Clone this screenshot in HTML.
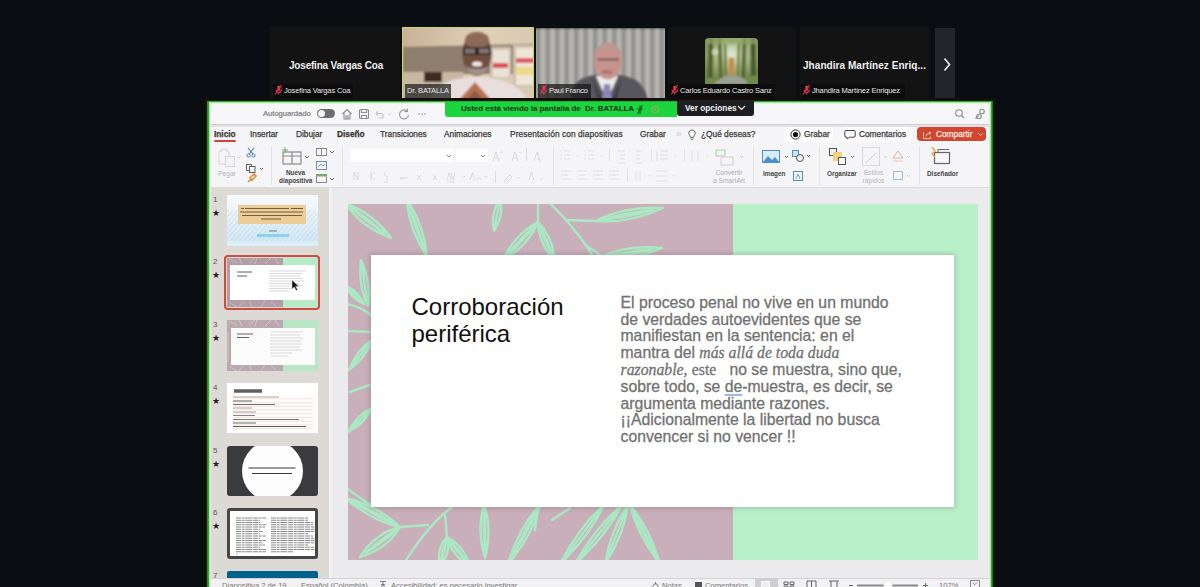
<!DOCTYPE html>
<html><head><meta charset="utf-8">
<style>
*{margin:0;padding:0;box-sizing:border-box}
html,body{width:1200px;height:587px;overflow:hidden;background:#0a0e13;font-family:"Liberation Sans",sans-serif}
.a{position:absolute}
.tile{position:absolute;top:27px;height:74px;background:#131313;overflow:hidden}
.tn{position:absolute;top:59px;color:#f0f0f0;font-weight:bold;font-size:10px;line-height:14px;letter-spacing:-0.2px;white-space:nowrap}
.lbl{position:absolute;top:84px;height:14px;background:#0c0c0c;color:#e8e8e8;font-size:7.5px;line-height:14px;padding-left:1px;white-space:nowrap;letter-spacing:-0.15px}
.mic{display:inline-block;width:9px;height:11px;vertical-align:-2px;margin-right:1px}
.tab{position:absolute;top:25px;font-size:8.3px;line-height:10px;color:#3a3a3a;white-space:nowrap;-webkit-text-stroke:0.25px currentColor}
.rl{position:absolute;font-size:7px;color:#333;text-align:center;line-height:8px;white-space:nowrap}
.gi{color:#bbb}
.thumb{position:absolute;left:227px;width:91px;height:51px;overflow:hidden}
.tnum{position:absolute;left:213px;font-size:8px;color:#555}
.star{position:absolute;left:212px;font-size:9px;color:#222}
.st{position:absolute;top:581px;font-size:7.6px;line-height:9px;color:#777;white-space:nowrap}
</style></head><body>

<!-- video strip -->
<div class="tile" style="left:270px;width:130px"></div>
<div class="tn" style="left:289px">Josefina Vargas Coa</div>
<div class="lbl" style="left:273px;width:80px"><svg class="mic" viewBox="0 0 10 12"><rect x="3.6" y="1.5" width="3.4" height="6" rx="1.7" fill="#d23a48"/><path d="M2.2 6c0 2.2 1.3 3.2 3.1 3.2s3.1-1 3.1-3.2 M5.3 9.2v2.3 M1.5 11.3L8.6 1" stroke="#d23a48" stroke-width="1.3" fill="none"/></svg><span>Josefina Vargas Coa</span></div>

<div class="tile" style="left:402px;width:132px;border:1px solid #c9d65c;padding:0">
<svg width="130" height="72" viewBox="403 28 130 72" style="display:block">
 <defs><filter id="b1"><feGaussianBlur stdDeviation="1.3"/></filter>
 <linearGradient id="g1" x1="0" y1="0" x2="1" y2="0"><stop offset="0" stop-color="#c8b197"/><stop offset=".6" stop-color="#e2d0b8"/><stop offset="1" stop-color="#d9c8b2"/></linearGradient></defs>
 <rect x="403" y="28" width="130" height="72" fill="url(#g1)"/>
 <g filter="url(#b1)">
 <path d="M403 47 L533 44 L533 74 L403 74Z" fill="#8e7e6e"/>
 <rect x="403" y="72" width="60" height="28" fill="#c9b8a4"/>
 <rect x="490" y="47" width="21" height="32" fill="#cfc2b2"/>
 <rect x="493" y="50" width="16" height="27" fill="#ebe2d6"/>
 <rect x="493" y="63" width="15" height="5" fill="#d94c55"/>
 <rect x="513" y="45" width="21" height="42" fill="#cdbfae"/>
 <rect x="516" y="48" width="18" height="37" fill="#efe6d8"/>
 <rect x="516" y="58" width="18" height="5" fill="#dc5a62"/>
 <rect x="516" y="67" width="18" height="8" fill="#ecd98a"/>
 <rect x="424" y="72" width="18" height="10" fill="#3c2a22"/>
 <path d="M430 101 C434 84 450 78 476 77 C502 78 520 84 528 101Z" fill="#e9dede"/>
 <ellipse cx="477" cy="54" rx="14.5" ry="22" fill="#6f4d3e"/>
 <ellipse cx="477" cy="40" rx="12" ry="8" fill="#8d6a58"/>
 <path d="M463 47h28v8h-28z" fill="#2c2320"/>
 <rect x="465" y="48.5" width="10" height="5" fill="#857372"/>
 <rect x="479" y="48.5" width="10" height="5" fill="#857372"/>
 <path d="M466 66 C468 78 486 78 488 66 C484 70 470 70 466 66Z" fill="#9f938c"/>
 <ellipse cx="477" cy="64" rx="5" ry="2.5" fill="#f0e8e6"/>
 <path d="M458 101 L475 82 L492 101Z" fill="#b8704c"/>
 <path d="M466 101 L475 90 L484 101Z" fill="#8a5a44"/>
 </g>
</svg>
</div>
<div class="lbl" style="left:405px;width:46px;background:rgba(40,40,40,.78)"><span style="margin-left:1px">Dr. BATALLA</span></div>

<div class="tile" style="left:536px;width:129px;top:28px;height:73px">
<svg width="129" height="73" viewBox="536 28 129 73" style="display:block">
 <defs><filter id="b2"><feGaussianBlur stdDeviation="1.2"/></filter><filter id="b2s"><feGaussianBlur stdDeviation="1.4"/></filter>
 <pattern id="cur" x="536" width="9.5" height="73" patternUnits="userSpaceOnUse"><rect width="9.5" height="73" fill="#bab9b6"/><rect x="0" width="4.5" height="73" fill="#8e8d8a"/></pattern></defs>
 <rect x="530" y="28" width="140" height="73" fill="url(#cur)" filter="url(#b2s)"/>
 <g filter="url(#b2)">
 <path d="M570 101 C572 80 582 75 607 74 C632 75 644 80 648 101Z" fill="#56575c"/>
 <path d="M596 76 L607 101 L618 76Z" fill="#ecebea"/>
 <path d="M604 84 L610 84 L612 101 L602 101Z" fill="#8d86b8"/>
 <path d="M592 78 L603 101 L598 101Z M622 78 L611 101 L616 101Z" fill="#3d3e42"/>
 <ellipse cx="608" cy="61" rx="14" ry="18.5" fill="#c7948d"/>
 <path d="M594 55 C595 40 621 40 622 55 C618 46 598 46 594 55Z" fill="#b89a92"/>
 <rect x="597" y="58" width="22" height="3" fill="#8e6a66"/>
 <ellipse cx="607" cy="72" rx="6" ry="2" fill="#b0706a"/>
 </g>
</svg>
</div>
<div class="lbl" style="left:538px;width:53px;background:rgba(25,25,25,.75)"><svg class="mic" viewBox="0 0 10 12"><rect x="3.6" y="1.5" width="3.4" height="6" rx="1.7" fill="#d23a48"/><path d="M2.2 6c0 2.2 1.3 3.2 3.1 3.2s3.1-1 3.1-3.2 M5.3 9.2v2.3 M1.5 11.3L8.6 1" stroke="#d23a48" stroke-width="1.3" fill="none"/></svg><span>Paul Franco</span></div>

<div class="tile" style="left:668px;width:128px"></div>
<svg class="a" style="left:705px;top:38px" width="53" height="46" viewBox="0 0 53 46">
 <defs><filter id="b3"><feGaussianBlur stdDeviation="0.8"/></filter><clipPath id="rc"><rect width="53" height="50" rx="4"/></clipPath>
 <radialGradient id="fg" cx=".5" cy=".35" r=".6"><stop offset="0" stop-color="#dfe9d8"/><stop offset=".5" stop-color="#a7b982"/><stop offset="1" stop-color="#6f8248"/></radialGradient></defs>
 <g clip-path="url(#rc)">
 <rect width="53" height="46" fill="url(#fg)"/>
 <g filter="url(#b3)">
 <path d="M4 0h4l-1 46h-4z" fill="#4d5a2c"/>
 <path d="M13 0h3l2 46h-4z" fill="#5b6a34"/>
 <path d="M19 6h2l1 34h-3z" fill="#6d7a44"/>
 <path d="M33 4h2l-1 36h-2z" fill="#6a7840"/>
 <path d="M38 0h3l-1 46h-4z" fill="#55653a"/>
 <path d="M46 0h4l1 46h-5z" fill="#4a5830"/>
 <rect x="0" y="0" width="53" height="6" fill="#90a468" opacity=".7"/>
 <rect x="24" y="20" width="5" height="17" fill="#c98a4e"/>
 <path d="M6 46 L20 38 L34 38 L48 46Z" fill="#9aa394"/>
 <rect x="0" y="40" width="10" height="6" fill="#6f8a4a"/><rect x="42" y="38" width="11" height="8" fill="#6f8a4a"/>
 <circle cx="10" cy="14" r="3" fill="#d8e2c0" opacity=".8"/>
 </g></g>
</svg>
<div class="lbl" style="left:669px;width:106px;background:rgba(12,12,12,.85)"><svg class="mic" viewBox="0 0 10 12"><rect x="3.6" y="1.5" width="3.4" height="6" rx="1.7" fill="#d23a48"/><path d="M2.2 6c0 2.2 1.3 3.2 3.1 3.2s3.1-1 3.1-3.2 M5.3 9.2v2.3 M1.5 11.3L8.6 1" stroke="#d23a48" stroke-width="1.3" fill="none"/></svg><span>Carlos Eduardo Castro Sanz</span></div>

<div class="tile" style="left:800px;width:129px"></div>
<div class="tn" style="left:803px;letter-spacing:0.05px">Jhandira Martínez Enriq...</div>
<div class="lbl" style="left:801px;width:104px"><svg class="mic" viewBox="0 0 10 12"><rect x="3.6" y="1.5" width="3.4" height="6" rx="1.7" fill="#d23a48"/><path d="M2.2 6c0 2.2 1.3 3.2 3.1 3.2s3.1-1 3.1-3.2 M5.3 9.2v2.3 M1.5 11.3L8.6 1" stroke="#d23a48" stroke-width="1.3" fill="none"/></svg><span>Jhandira Martínez Enriquez</span></div>

<div class="a" style="left:935px;top:28px;width:20px;height:71px;background:#22262a"></div>
<svg class="a" style="left:942px;top:57px" width="10" height="15" viewBox="0 0 10 15"><path d="M2.5 1.5l5 6-5 6" stroke="#e8e8e8" stroke-width="1.7" fill="none"/></svg>

<!-- share window -->
<div class="a" style="left:204px;top:98px;width:792px;height:495px;background:#170c0b"></div><div class="a" style="left:206px;top:100px;width:788px;height:495px;background:#032e05"></div><div class="a" style="left:207px;top:101px;width:786px;height:495px;background:#2f8a30"></div><div class="a" style="left:208px;top:101px;width:784px;height:495px;background:#3c9e3a"></div><div class="a" style="left:209px;top:102px;width:782px;height:495px;background:#a6e99c"></div><div class="a" style="left:210px;top:103px;width:780px;height:495px;background:#e6f2e4"></div>
<div class="a" style="left:210px;top:104px;width:780px;height:490px;background:#f4f3f5;overflow:hidden" id="win">
 <!-- title bar -->
 <div class="a" style="left:0;top:0;width:780px;height:20px;background:#f6f5f7"></div>
 <div class="a" style="left:53px;top:5px;font-size:7.6px;color:#7c7c7c;white-space:nowrap;-webkit-text-stroke:0.2px #7c7c7c">Autoguardado</div>
 <div class="a" style="left:107px;top:5px;width:18px;height:9px;border-radius:5px;background:#6e6e70"></div>
 <div class="a" style="left:108px;top:6px;width:7px;height:7px;border-radius:4px;background:#f4f4f4"></div>
 <svg class="a" style="left:131px;top:3px" width="100" height="14" viewBox="0 0 100 14" fill="none" stroke="#8e8e90" stroke-width="1.1">
  <path d="M1.5 7 L6 2.5 L10.5 7 M3 6v6h6V6 M5 12v-3h2v3"/>
  <rect x="18.5" y="2.5" width="9" height="9" rx="1"/><path d="M20.5 2.5v3h5v-3 M20.5 11.5v-3h5v3"/>
  <path d="M37 4.5 L35 6.5 L37 8.5 M35.2 6.5 H40 C43 6.5 43 11 40 11 H38" stroke="#c4c4c6"/>
  <path d="M47 6.5l1.5 1.5 1.5-1.5" stroke="#c4c4c6" stroke-width="0.8"/>
  <path d="M66 4 A4.5 4.5 0 1 0 67.5 8 M66.5 1.5 V4.5 H63.5" stroke="#9a9a9c"/>
  <circle cx="78" cy="7" r="0.8" fill="#8e8e90" stroke="none"/><circle cx="81" cy="7" r="0.8" fill="#8e8e90" stroke="none"/><circle cx="84" cy="7" r="0.8" fill="#8e8e90" stroke="none"/>
 </svg>
 <svg class="a" style="left:744px;top:3px" width="34" height="14" viewBox="0 0 34 14" fill="none" stroke="#8a8a8c" stroke-width="1.1">
  <circle cx="5" cy="6" r="3.3"/><path d="M7.5 8.5l2.5 2.5"/>
  <circle cx="28" cy="4.5" r="2.2"/><circle cx="25" cy="9.5" r="2.2"/><path d="M22 12c0-2 1-3 3-3"/>
 </svg>
 <div class="a" style="left:0;top:20px;width:780px;height:1px;background:#cfcdcf"></div>
 <div class="a" style="left:0;top:21px;width:780px;height:2px;background:#e3e1e3"></div>

 <!-- tabs -->
 <div class="a" style="left:0;top:23px;width:780px;height:61px;background:#f5f4f6"></div>
 <div class="tab" style="left:4px;font-weight:bold;color:#3a3a3a">Inicio</div>
 <div class="a" style="left:4px;top:36px;width:22px;height:2px;border-radius:1px;background:#c9453f"></div>
 <div class="tab" style="left:40px">Insertar</div>
 <div class="tab" style="left:86px">Dibujar</div>
 <div class="tab" style="left:127px;font-weight:bold;color:#333">Diseño</div>
 <div class="tab" style="left:170px">Transiciones</div>
 <div class="tab" style="left:234px">Animaciones</div>
 <div class="tab" style="left:300px;letter-spacing:0.1px">Presentación con diapositivas</div>
 <div class="tab" style="left:430px">Grabar</div>
 <div class="tab" style="left:466px;color:#cfcfcf;font-size:10px;-webkit-text-stroke:0">»</div>
 <svg class="a" style="left:478px;top:25px" width="8" height="12" viewBox="0 0 8 12" fill="none" stroke="#555" stroke-width="0.9"><path d="M4 1C1.8 1 0.8 2.6 0.8 4.2c0 1.6 1.4 2.6 1.6 4.2h3.2c0.2-1.6 1.6-2.6 1.6-4.2C7.2 2.6 6.2 1 4 1z M2.6 10.3h2.8"/></svg>
 <div class="tab" style="left:491px">¿Qué deseas?</div>
 <div class="a" style="left:575px;top:23px;width:48px;height:15px;border-radius:4px;background:#fbfafc"></div>
 <svg class="a" style="left:580px;top:25px" width="11" height="11" viewBox="0 0 11 11"><circle cx="5.5" cy="5.5" r="4.6" fill="none" stroke="#333" stroke-width="1"/><circle cx="5.5" cy="5.5" r="2.6" fill="#111"/></svg>
 <div class="tab" style="left:594px">Grabar</div>
 <div class="a" style="left:630px;top:23px;width:72px;height:15px;border-radius:4px;background:#fbfafc"></div>
 <svg class="a" style="left:634px;top:25px" width="12" height="11" viewBox="0 0 12 11" fill="none" stroke="#444" stroke-width="1"><path d="M2 1.5h8a1.2 1.2 0 0 1 1.2 1.2v4.3a1.2 1.2 0 0 1-1.2 1.2H5.5L3 10V8.2H2A1.2 1.2 0 0 1 0.8 7V2.7A1.2 1.2 0 0 1 2 1.5z"/></svg>
 <div class="tab" style="left:649px">Comentarios</div>
 <div class="a" style="left:707px;top:23px;width:69px;height:14px;border-radius:4px;background:#d2462f"></div>
 <svg class="a" style="left:712px;top:25px" width="11" height="11" viewBox="0 0 11 11" fill="none" stroke="#f7d9d2" stroke-width="0.9"><path d="M1.5 3.5v6h7v-2 M4 7.5c0.5-2.5 2-3.5 4-3.5 M7 2.3L9 4 7 5.8"/></svg>
 <div class="tab" style="left:726px;color:#fbe8e3">Compartir</div>
 <svg class="a" style="left:767px;top:28px" width="7" height="5" viewBox="0 0 7 5"><path d="M1 1l2.5 2.5L6 1" stroke="#f4cfc6" stroke-width="0.9" fill="none"/></svg>
 <!-- ribbon -->
 <div class="a" style="left:0;top:83px;width:780px;height:1px;background:#dddcde"></div>
 <svg class="a" style="left:0;top:39px" width="780" height="45" viewBox="210 143 780 45" fill="none" stroke-width="1">
  <!-- separators -->
  <g stroke="#e3e3e3"><path d="M271.5 147v38 M342.5 147v38 M553.5 147v38 M753.5 147v38 M819.5 147v38 M919.5 147v38"/></g>
  <!-- Pegar -->
  <g stroke="#d6d6d6"><path d="M219 151h3v-2h4v2h3v13h-10z"/><rect x="225.5" y="156.5" width="9" height="10" fill="#f3f2f4"/></g>
  <path d="M237 156l2 2 2-2" stroke="#d0d0d0" stroke-width="0.8"/>
  <!-- cut copy painter -->
  <path d="M248 148l5 6 M254 148l-5 6" stroke="#4a7fb5" stroke-width="1.1"/><circle cx="248.5" cy="155.5" r="1.6" stroke="#4a7fb5"/><circle cx="253.5" cy="155.5" r="1.6" stroke="#4a7fb5"/>
  <g stroke="#555" stroke-width="0.9"><rect x="246.5" y="164.5" width="5" height="6"/><rect x="249.5" y="166.5" width="5.5" height="6" fill="#f3f2f4"/></g>
  <path d="M260 168l1.5 1.5 1.5-1.5" stroke="#555" stroke-width="0.8"/>
  <path d="M248 182l3-3 M250 178l4-4 2 2-4 4z" stroke="#e0903a" stroke-width="1.6"/>
  <!-- nueva diapositiva -->
  <g stroke="#8a8a8a" stroke-width="1.2"><rect x="283" y="152" width="18" height="12"/><path d="M292 152v12 M283 156h18"/></g>
  <path d="M285 147v6 M282 150h6" stroke="#6fae6f" stroke-width="1"/>
  <path d="M305 156l2 2 2-2" stroke="#555" stroke-width="0.9"/>
  <g stroke="#8a8a8a"><rect x="316.5" y="148.5" width="10" height="7"/><path d="M321.5 148.5v7"/></g>
  <path d="M330 151l2 2 2-2" stroke="#555" stroke-width="0.9"/>
  <rect x="316.5" y="161.5" width="10" height="8" stroke="#6a8fb5"/><path d="M318 167l3-3 2 2 2-2" stroke="#6a8fb5" stroke-width="0.8"/>
  <rect x="316.5" y="174.5" width="10" height="8" stroke="#8a8a8a"/><rect x="316.5" y="174.5" width="10" height="2" fill="#6fae6f" stroke="none"/>
  <path d="M330 178l2 2 2-2" stroke="#555" stroke-width="0.9"/>
  <!-- font boxes -->
  <rect x="350" y="149" width="104" height="13" rx="1" fill="#fff" stroke="none"/>
  <rect x="456" y="149" width="32" height="13" rx="1" fill="#fff" stroke="none"/>
  <path d="M447 155l2 2 2-2 M481 155l2 2 2-2" stroke="#888" stroke-width="0.9"/>
  <g stroke="#d6d6d6" stroke-width="0.8"><path d="M493 161l3-9 3 9 M494.5 158h3 M500 153l1.5-1.5 1.5 1.5 M512 161l3-9 3 9 M513.5 158h3 M519 152l1.5 1.5 1.5-1.5 M526.5 148v13 M534 161l3-9 3 9 M537 158l4 4"/>
  <path d="M354 180v-8l4 8v-8 M371 172v8 M375 172l-4 4 4 4 M386 172c-2 0-2.5 3 0 4s2 4 0 4 M384 182h4 M400 178h8 M401 180c0-3 1-3 1-3 M417 175l4 5 M421 175l-4 5 M423 172l1 1 M433 175l4 5 M437 175l-4 5 M439 181l1 1 M447 180l2-7 2 7 M451 173l2 7 2-7 M447 182h8 M462 176l1.5 1.5 1.5-1.5 M470 180l2.5-7 2.5 7 M477 180c0-3 4-3 4 0 M485 176l1.5 1.5 1.5-1.5 M495.5 171v12 M504 181l6-6 2 2-6 6z M517 177l1.5 1.5 1.5-1.5 M529 180l2.5-8 2.5 8 M540 178l1.5 1.5 1.5-1.5"/></g>
  <!-- paragraph -->
  <g stroke="#dcdcdc" stroke-width="0.8"><path d="M560 151h2 M564 151h6 M560 155h2 M564 155h6 M560 159h2 M564 159h6 M576 155l1.5 1.5 1.5-1.5 M584 151h2 M588 151h6 M584 155h2 M588 155h6 M584 159h2 M588 159h6 M600 155l1.5 1.5 1.5-1.5 M609.5 149v12 M617 151h8 M620 155h5 M620 159h5 M617 163h8 M636 151h6 M636 155h4 M636 159h4 M636 163h6 M651.5 149v12 M657 151v10 M660 151h8 M660 155h8 M660 159h8 M674 155l1.5 1.5 1.5-1.5 M684.5 149v12 M692 151v10 M698 151v10 M706 155l1.5 1.5 1.5-1.5 M561 171h10 M561 175h7 M561 179h10 M577 171h10 M579 175h6 M577 179h10 M593 171h10 M593 175h10 M593 179h10 M609 171h10 M609 175h10 M609 179h10 M627.5 168v13 M636 171v10 M640 171v10 M649 175l1.5 1.5 1.5-1.5 M656 171h12 M656 176h12 M656 181h12 M673 175l1.5 1.5 1.5-1.5"/></g>
  <g stroke="#a5d3a8" stroke-width="1"><rect x="716" y="150" width="9" height="6"/><rect x="721" y="157" width="12" height="8" stroke="#cfcfcf"/></g>
  <path d="M740 156l1.5 1.5 1.5-1.5" stroke="#bbb" stroke-width="0.9"/>
  <!-- imagen etc -->
  <rect x="762.5" y="150.5" width="17" height="12" stroke="#4b8fcf" fill="#d8ecfa"/><path d="M763 162l5-6 4 4 3-3 4 5z" fill="#4b8fcf" stroke="none"/>
  <path d="M785 156l1.5 1.5 1.5-1.5" stroke="#555" stroke-width="0.9"/>
  <rect x="792.5" y="150.5" width="6" height="6" stroke="#4b8fcf" fill="#cfe3f4"/><circle cx="800" cy="158" r="3.5" stroke="#555" fill="#f3f2f4"/>
  <path d="M807 155l1.5 1.5 1.5-1.5" stroke="#555" stroke-width="0.9"/>
  <rect x="793.5" y="171.5" width="9" height="9" stroke="#4b8fcf"/><path d="M796 179l2-5 2 5" stroke="#4b8fcf" stroke-width="0.8"/>
  <rect x="829.5" y="148.5" width="7" height="7" stroke="#555"/><rect x="833" y="152" width="9" height="9" fill="#f3d27a" stroke="none"/><rect x="838.5" y="157.5" width="7" height="7" stroke="#555" fill="#fafafa"/>
  <path d="M851 156l1.5 1.5 1.5-1.5" stroke="#555" stroke-width="0.9"/>
  <rect x="862.5" y="147.5" width="17" height="18" stroke="#d8d8d8"/><path d="M866 163l10-10" stroke="#cfcfcf"/>
  <path d="M884 156l1.5 1.5 1.5-1.5" stroke="#ccc" stroke-width="0.9"/>
  <path d="M893 158l5-7 5 7z" stroke="#e8b0a0"/><path d="M893 161h10" stroke="#f0c8b8"/>
  <rect x="893.5" y="171.5" width="9" height="8" stroke="#9fc0dc"/>
  <path d="M907 156l1.5 1.5 1.5-1.5 M907 175l1.5 1.5 1.5-1.5" stroke="#ccc" stroke-width="0.9"/>
  <rect x="934.5" y="152.5" width="15" height="11" stroke="#666" stroke-width="1.2"/><path d="M938 152.5v-3h11" stroke="#666"/>
  <path d="M932 147l3 4-3 3 3 3" stroke="#f0a63a" stroke-width="1.3"/>
 </svg>
 <div class="rl" style="left:8px;top:66px;font-size:6.7px;color:#b5b5b5">Pegar</div>
 <div class="rl" style="left:69px;top:65px;width:33px;font-size:6.4px;font-weight:bold;color:#444">Nueva<br>diapositiva</div>
 <div class="rl" style="left:502px;top:65px;width:34px;font-size:6.7px;color:#b0b0b0">Convertir<br>a SmartArt</div>
 <div class="rl" style="left:553px;top:66px;font-size:6.4px;font-weight:bold;color:#444">Imagen</div>
 <div class="rl" style="left:617px;top:66px;font-size:6.4px;font-weight:bold;color:#444">Organizar</div>
 <div class="rl" style="left:652px;top:65px;width:23px;font-size:6.7px;color:#b8b8b8">Estilos<br>rápidos</div>
 <div class="rl" style="left:717px;top:66px;font-size:6.4px;font-weight:bold;color:#444">Diseñador</div>
</div>
<!-- main area (page coords) -->
<div class="a" style="left:210px;top:188px;width:119px;height:400px;background:#dddad6"></div>
<div class="a" style="left:329px;top:188px;width:3px;height:400px;background:#f2f1f2"></div>
<div class="a" style="left:332px;top:188px;width:658px;height:400px;background:#ebeaec"></div>

<!-- thumbnails -->
<div class="tnum" style="top:195px">1</div><div class="star" style="top:208px">★</div>
<div class="tnum" style="top:257px">2</div><div class="star" style="top:270px">★</div>
<div class="tnum" style="top:320px">3</div><div class="star" style="top:333px">★</div>
<div class="tnum" style="top:383px">4</div><div class="star" style="top:396px">★</div>
<div class="tnum" style="top:446px">5</div><div class="star" style="top:459px">★</div>
<div class="tnum" style="top:508px">6</div><div class="star" style="top:521px">★</div>
<div class="tnum" style="top:571px">7</div>

<svg class="a" style="left:227px;top:195px" width="91" height="51" viewBox="0 0 91 51">
 <defs><linearGradient id="t1g" x1="0" y1="0" x2="0" y2="1"><stop offset="0" stop-color="#f7fafd"/><stop offset=".55" stop-color="#e4eff8"/><stop offset="1" stop-color="#cfe6f2"/></linearGradient>
 <pattern id="t1p" width="3.5" height="3.5" patternUnits="userSpaceOnUse" patternTransform="rotate(40)"><path d="M0 0v3.5" stroke="#a4cde6" stroke-width="0.9"/></pattern>
 <pattern id="t1q" width="5" height="5" patternUnits="userSpaceOnUse" patternTransform="rotate(-40)"><path d="M0 0v5" stroke="#b9dbee" stroke-width="0.6"/></pattern></defs>
 <rect width="91" height="51" fill="url(#t1g)"/>
 <rect y="15" width="91" height="33" fill="url(#t1p)" opacity=".75"/>
 <rect y="15" width="91" height="33" fill="url(#t1q)" opacity=".6"/>
 <rect x="0" y="46" width="91" height="5" fill="#dff0f8" opacity=".8"/>
 <rect x="11" y="10" width="68" height="19" fill="#eccd97"/>
 <g stroke="#4e3b1f" stroke-width="0.9" opacity=".85"><path d="M14 13.5h3 M18 13.5h44 M64 13.5h12 M13 17h63 M15 20.5h60 M34 24h20"/></g>
 <rect x="30" y="39" width="32" height="3" fill="#8fd0f0"/>
 <path d="M42 36h8" stroke="#3a4a5a" stroke-width="0.7"/>
</svg>

<div class="a" style="left:224px;top:255px;width:96px;height:55px;border:2px solid #c84d42;border-radius:4px"></div>
<svg class="a" style="left:227px;top:258px" width="90" height="49" viewBox="0 0 90 49">
 <rect width="90" height="49" fill="#b59da8"/><rect x="56" width="34" height="49" fill="#b5ecc6"/>
 <g stroke="#c9dccb" stroke-width="0.7" opacity=".8"><path d="M2 1l8 4 M12 0l3 6 M22 5l6-5 M30 0l-2 6 M38 6l6-6 M48 0l4 6 M2 44l8 5 M12 49l5-6 M22 43l3 6 M34 49l4-6 M44 44l6 5"/></g>
 <rect x="3" y="7" width="85" height="35" fill="#fff"/>
 <g stroke="#3a3a3a" stroke-width="0.8"><path d="M10 14h15 M10 18h10"/></g>
 <g stroke="#c8c8c8" stroke-width="0.7"><path d="M42 13h37 M42 15.5h33 M42 18h31 M42 20.5h34 M42 23h35 M42 25.5h30 M42 28h36 M42 30.5h24 M42 33h20"/></g>
 <path d="M65 22v9l2.2-2 2 3.6 1.4-0.8-2-3.4 3-0.2z" fill="#111" stroke="#eee" stroke-width="0.4"/>
</svg>

<svg class="a" style="left:227px;top:320px" width="91" height="51" viewBox="0 0 91 51">
 <rect width="91" height="51" fill="#bca9b0"/><rect x="56" width="35" height="51" fill="#b9e6c6"/>
 <g stroke="#cfd8cf" stroke-width="0.7"><path d="M2 1l8 4 M12 0l3 6 M22 5l6-5 M30 0l-2 6 M38 6l6-6 M48 0l4 6 M2 46l8 5 M12 51l5-6 M22 45l3 6 M34 51l4-6 M44 46l6 5 M1 12v30"/></g>
 <rect x="4" y="8" width="84" height="37" fill="#fbfbfb"/>
 <g stroke="#3a3a3a" stroke-width="0.8"><path d="M10 14h16 M10 17.5h12"/></g>
 <g stroke="#d2d2d2" stroke-width="0.8"><path d="M43 12h33 M43 15h30 M43 18h33 M43 21h31 M43 24h32 M43 27h30 M43 30h32 M43 33h22 M43 36h18"/></g>
</svg>

<svg class="a" style="left:227px;top:383px" width="91" height="50" viewBox="0 0 91 50">
 <rect width="91" height="50" fill="#fff"/>
 <path d="M7 8h28" stroke="#2a2a2a" stroke-width="3.5" opacity=".75"/>
 <path d="M6 15.8h80 M6 19.8h80 M6 23.3h80 M6 26.8h80 M6 30.8h80 M6 34.3h80 M6 38.3h80 M6 41.8h80 M6 45.3h80 " stroke="#f0c8c0" stroke-width="0.6"/>
 <g stroke-width="0.8"><path d="M6 14h46" stroke="#9a8a80"/><path d="M6 18h19" stroke="#333"/><path d="M6 21.5h42" stroke="#444"/><path d="M6 25h19" stroke="#9a8a80"/><path d="M6 29h23" stroke="#8a8078"/><path d="M6 32.5h22" stroke="#666"/><path d="M6 36.5h66" stroke="#555"/><path d="M6 40h23" stroke="#444"/><path d="M6 43.5h73" stroke="#333"/></g>
</svg>

<svg class="a" style="left:227px;top:446px" width="91" height="50" viewBox="0 0 91 50">
 <defs><clipPath id="t5c"><rect width="91" height="50" rx="3"/></clipPath></defs>
 <g clip-path="url(#t5c)"><rect width="91" height="50" fill="#3b3a3c"/>
 <circle cx="45.5" cy="25" r="30.5" fill="#fdfdfd"/></g>
 <g stroke="#3a3a3a" stroke-width="1.1"><path d="M21.5 22h47 M25 27.5h40"/></g>
</svg>

<svg class="a" style="left:227px;top:508px" width="91" height="51" viewBox="0 0 91 51">
 <rect width="91" height="51" rx="3" fill="#464646"/><rect x="3" y="3" width="85" height="45" fill="#fff"/>
 <path d="M9 10.00h30 M9 12.25h24 M9 14.50h24 M9 16.75h30 M9 19.00h29 M9 21.25h24 M9 23.50h27 M9 25.75h24 M9 28.00h30 M9 30.25h24 M9 32.50h30 M9 34.75h27 M9 37.00h29 M9 39.25h24 M9 41.50h30 M9 43.75h30 M9 46.00h1 M44 10.00h37 M44 12.25h37 M44 14.50h42 M44 16.75h42 M44 19.00h45 M44 21.25h45 M44 23.50h45 M44 25.75h37 M44 28.00h42 M44 30.25h45 M44 32.50h45 M44 34.75h45 M44 37.00h37 M44 39.25h45 M44 41.50h44 M44 43.75h22 " stroke="#6a6a6a" stroke-width="0.8" stroke-dasharray="5 0.7 3 0.6 7 0.8"/>
</svg>
<div class="a" style="left:227px;top:571px;width:91px;height:7px;background:#03628c;border-radius:2px 2px 0 0"></div>
<!-- slide -->
<div class="a" style="left:348px;top:204px;width:630px;height:356px;overflow:hidden;background:#c8afba">
 <div class="a" style="left:385px;top:0;width:245px;height:356px;background:#b8f0ca"></div>
 <svg class="a" style="left:0;top:0" width="385" height="356" viewBox="348 204 385 356" fill="none" stroke="#abe9c4" stroke-width="2.4" stroke-linecap="round" stroke-linejoin="round"><path d="M346.0 204.0Q360.8 226.5 391.0 238.0Q371.7 212.1 346.0 204.0M350.5 207.4Q367.2 218.0 384.2 232.9M350.5 207.4Q365.3 220.6 384.2 232.9M407.0 200.0Q408.5 228.3 427.0 257.0Q423.5 223.0 407.0 200.0M409.0 205.7Q417.4 225.2 424.0 248.4M409.0 205.7Q414.6 226.1 424.0 248.4M500.0 200.0Q490.4 212.6 494.0 231.0Q504.2 215.3 500.0 200.0M499.4 203.1Q497.3 213.9 494.9 226.3M538 200L538 222M546 200C560 212 585 240 596 262M538.0 222.0Q515.6 233.0 503.0 260.0Q528.9 245.2 538.0 222.0M534.5 225.8Q523.5 240.2 508.2 254.3M534.5 225.8Q521.0 238.0 508.2 254.3M538.0 222.0Q538.3 243.1 555.0 262.0Q553.0 236.9 538.0 222.0M539.7 226.0Q547.0 239.4 552.5 256.0M539.7 226.0Q544.3 240.6 552.5 256.0M566 220L596 221M596.0 221.0Q627.9 224.0 663.0 208.0Q624.4 206.3 596.0 221.0M602.7 219.7Q625.7 212.7 653.0 209.9M602.7 219.7Q626.1 215.2 653.0 209.9M602.7 219.7Q626.6 217.6 653.0 209.9M585 245L602 256M598.0 258.0Q628.2 262.4 662.0 248.0Q625.4 244.6 598.0 258.0M604.4 257.0Q626.4 251.1 652.4 249.5M604.4 257.0Q626.8 253.5 652.4 249.5M604.4 257.0Q627.2 255.9 652.4 249.5M368.0 306.0Q371.8 284.2 361.0 260.0Q357.9 286.4 368.0 306.0M367.3 301.4Q364.9 285.3 362.1 266.9M346.0 286.0Q350.6 297.6 364.0 304.0Q357.6 290.6 346.0 286.0M347.8 287.8Q354.1 294.1 361.3 301.3M346 304Q360 306 372 316M346 331L372 332M372.0 340.0Q356.9 349.8 349.0 370.0Q366.4 357.2 372.0 340.0M369.7 343.0Q361.6 353.5 352.4 365.5M350 392L372 384M372.0 408.0Q357.0 414.6 348.0 432.0Q365.4 423.0 372.0 408.0M369.6 410.4Q361.2 418.8 351.6 428.4M346 488L372 506M400.0 527.0Q378.6 506.4 344.0 497.0Q371.0 520.6 400.0 527.0M394.4 524.0Q374.1 514.8 352.4 501.5M394.4 524.0Q375.5 512.2 352.4 501.5M400.0 527.0Q376.0 532.5 360.0 557.0Q388.0 548.5 400.0 527.0M396.0 530.0Q383.1 542.0 366.0 552.5M396.0 530.0Q380.9 539.0 366.0 552.5M400 527L428 525M452 507Q428 525 405 562M445 515L447 537M447.0 537.0Q436.1 548.2 440.0 566.0Q451.6 551.9 447.0 537.0M446.3 539.9Q445.3 550.4 441.1 561.6M446.3 539.9Q442.4 549.7 441.1 561.6M447.0 537.0Q451.1 555.0 470.0 566.0Q463.6 545.1 447.0 537.0M449.3 539.9Q458.5 549.1 466.6 561.6M449.3 539.9Q456.2 551.0 466.6 561.6M484.0 505.0Q476.5 529.0 485.0 558.0Q492.4 528.7 484.0 505.0M484.1 510.3Q485.9 528.8 484.9 550.0M484.1 510.3Q483.0 528.9 484.9 550.0M540.0 505.0Q518.6 527.7 508.0 564.0Q532.6 535.4 540.0 505.0M536.8 510.9Q526.9 532.2 512.8 555.1M536.8 510.9Q524.3 530.9 512.8 555.1M538 507L535 530M552 520L570 508M604.0 505.0Q578.6 527.4 560.0 564.0Q589.8 535.7 604.0 505.0M599.6 510.9Q584.2 531.5 566.6 555.1M622.0 505.0Q595.4 527.2 575.0 564.0Q606.3 535.9 622.0 505.0M617.3 510.9Q600.9 531.5 582.0 555.1M628.0 505.0Q611.1 529.0 605.0 564.0Q624.2 534.1 628.0 505.0M625.7 510.9Q617.6 531.5 608.5 555.1M630.0 505.0Q637.3 534.7 660.0 564.0Q649.7 528.4 630.0 505.0M633.0 510.9Q644.6 531.0 655.5 555.1M633.0 510.9Q642.4 532.1 655.5 555.1"/></svg>
 <div class="a" style="left:23px;top:51px;width:583px;height:252px;background:#fff;box-shadow:0 0 5px 1px rgba(60,30,50,.22)"></div>
 <div class="a" style="left:63.5px;top:89px;font-size:24px;line-height:27.2px;color:#111;white-space:nowrap">Corroboración<br>periférica</div>
 <div class="a" style="left:272.5px;top:90.7px;font-size:15.75px;line-height:16.82px;color:#727272;-webkit-text-stroke:0.3px #727272;white-space:nowrap" id="body">El proceso penal no vive en un mundo<br>de verdades autoevidentes que se<br>manifiestan en la sentencia: en el<br>mantra del <i style="font-family:'Liberation Serif',serif">más allá de toda duda</i><br><i style="font-family:'Liberation Serif',serif">razonable,</i> <span style="font-family:'Liberation Serif',serif">este</span>&nbsp;&nbsp; no se muestra, sino que,<br>sobre todo, se <span style="text-decoration:underline;text-decoration-color:#a4b6e4;text-decoration-thickness:1.5px;text-underline-offset:1.5px">de</span>-muestra, es decir, se<br>argumenta mediante razones.<br>¡¡Adicionalmente la libertad no busca<br>convencer si no vencer !!</div>
</div>

<!-- status bar -->
<div class="a" style="left:210px;top:578px;width:780px;height:1px;background:#d3d1d3"></div>
<div class="a" style="left:210px;top:579px;width:780px;height:12px;background:#f2f1f3"></div>
<div class="st" style="left:222px">Diapositiva 2 de 19</div>
<div class="st" style="left:301px">Español (Colombia)</div>
<div class="st" style="left:391px">Accesibilidad: es necesario investigar</div><svg class="a" style="left:379px;top:580px" width="8" height="8" viewBox="0 0 8 8" fill="none" stroke="#777" stroke-width="0.9"><path d="M1 1.5h6 M4 1.5v3 M2 4.5h4 M2.5 7l1.5-2.5 1.5 2.5"/></svg>
<div class="st" style="left:662px">Notas</div><svg class="a" style="left:651px;top:581px" width="9" height="7" viewBox="0 0 9 7" fill="none" stroke="#777" stroke-width="0.9"><path d="M1 7l2-4h3l2 4 M4.5 3V1"/></svg>
<div class="a" style="left:695px;top:582px;width:7px;height:6px;background:#555"></div>
<div class="st" style="left:705px">Comentarios</div>
<div class="a" style="left:755px;top:578px;width:23px;height:10px;background:#cfcfd1"></div>
<div class="a" style="left:761px;top:581px;width:9px;height:7px;border:1px solid #fff;background:#eee"></div>
<svg class="a" style="left:780px;top:578px" width="210" height="9" viewBox="780 578 210 9" fill="none" stroke="#666" stroke-width="1">
 <path d="M784 582h4v2.5h-4z M790 582h4v2.5h-4z M784 586h4v2h-4z M790 586h4v2h-4z M807 581h9v7h-9z M811.5 581v7 M829 581h10 M831 581v7 M837 581v7 M849 585.5h4 M923 585.5h5 M925.5 583v5"/>
 <path d="M857 585.5h61" stroke="#8a8a8a" stroke-width="2"/>
 <circle cx="888" cy="585" r="4.2" fill="#fff" stroke="#e4e4e4"/>
 <path d="M970.5 580.5h9v7h-9z M973 583l2 2 M977 582.5l-2 2" stroke="#888"/>
</svg>
<div class="st" style="left:939px">107%</div>

<!-- border overlays -->
<div class="a" style="left:210px;top:104px;width:1px;height:483px;background:#e4ece2"></div>
<div class="a" style="left:989px;top:104px;width:1px;height:483px;background:#dfeedb"></div>
<div class="a" style="left:990px;top:103px;width:1px;height:484px;background:#a6e99c"></div>
<div class="a" style="left:991px;top:102px;width:1px;height:485px;background:#3c9e3a"></div>
<div class="a" style="left:992px;top:101px;width:1px;height:486px;background:#1d6e1f"></div>
<div class="a" style="left:993px;top:100px;width:1px;height:487px;background:#032e05"></div>
<div class="a" style="left:994px;top:98px;width:2px;height:489px;background:#170c0b"></div>
<!-- zoom banner -->
<div class="a" style="left:445px;top:102px;width:232px;height:14.5px;background:#1bd540;border-radius:0 0 0 3px"></div>
<div class="a" style="left:461px;top:104px;font-size:8px;font-weight:bold;color:#0a3312;white-space:nowrap;letter-spacing:-0.05px">Usted está viendo la pantalla de&nbsp; Dr. BATALLA</div>
<svg class="a" style="left:637px;top:104px" width="24" height="11" viewBox="0 0 24 11"><path d="M3 1.5v5 M1 4c0 2 1 3 2 3s2-1 2-3 M3 7v3 M0.5 10L5.5 1" stroke="#0f4b1c" stroke-width="1" fill="none"/><circle cx="18" cy="5.5" r="3.2" fill="none" stroke="#8bb04a" stroke-width="1.3"/><circle cx="18" cy="5.5" r="1.2" fill="#8bb04a"/></svg>
<div class="a" style="left:677px;top:100px;width:77px;height:16px;background:#1d1e22;border-radius:0 0 3px 3px"></div>
<div class="a" style="left:685px;top:103px;font-size:8.3px;font-weight:bold;color:#f2f2f2;white-space:nowrap">Ver opciones</div>
<svg class="a" style="left:737px;top:105px" width="9" height="6" viewBox="0 0 9 6"><path d="M1 1l3.5 3.5L8 1" stroke="#eee" stroke-width="1.2" fill="none"/></svg>

</body></html>
